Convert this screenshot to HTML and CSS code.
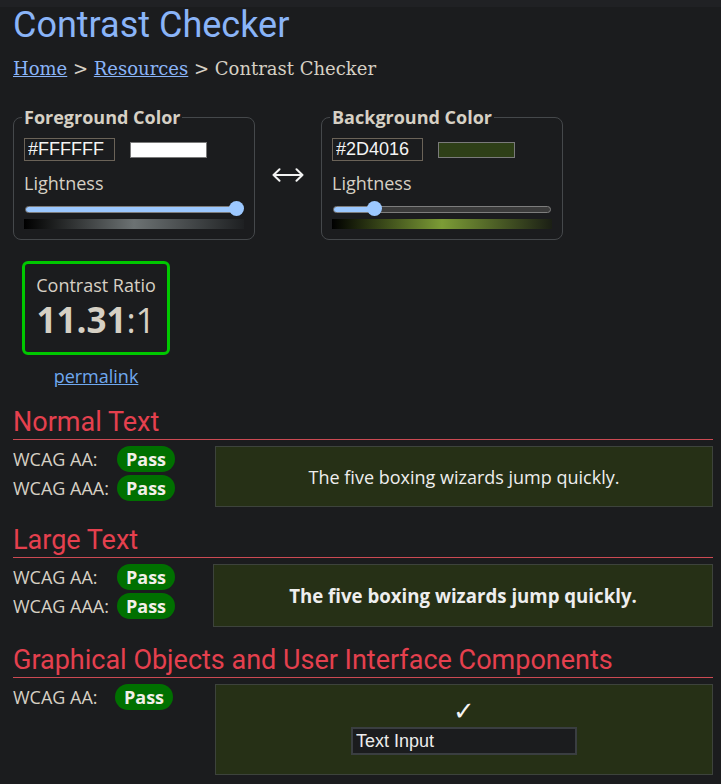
FILE: index.html
```html
<!DOCTYPE html>
<html lang="en">
<head>
<meta charset="utf-8">
<title>Contrast Checker</title>
<link rel="stylesheet" href="styles.css">
</head>
<body>
<div class="topbar"></div>
<main class="page">
  <h1 class="title">Contrast Checker</h1>
  <nav class="crumbs"><a href="#">Home</a> &gt; <a href="#">Resources</a> &gt; Contrast Checker</nav>

  <div class="pickers">
    <fieldset class="picker">
      <legend>Foreground Color</legend>
      <div class="hexrow">
        <input class="hex" type="text" value="#FFFFFF">
        <span class="swatch swatch-fg"></span>
      </div>
      <label class="lbl">Lightness</label>
      <div class="slider">
        <div class="track"><div class="fill" style="width:100%"></div></div>
        <span class="thumb" style="left:205px"></span>
      </div>
      <div class="grad grad-fg"></div>
    </fieldset>

    <div class="swap">
      <svg width="32" height="14" viewBox="0 0 32 14" aria-hidden="true">
        <path d="M1.5 7 H30.5 M7.5 1.2 L1.5 7 L7.5 12.8 M24.5 1.2 L30.5 7 L24.5 12.8" fill="none" stroke="#f2f2f2" stroke-width="2" stroke-linecap="round" stroke-linejoin="round"/>
      </svg>
    </div>

    <fieldset class="picker">
      <legend>Background Color</legend>
      <div class="hexrow">
        <input class="hex" type="text" value="#2D4016">
        <span class="swatch swatch-bg"></span>
      </div>
      <label class="lbl">Lightness</label>
      <div class="slider">
        <div class="track"><div class="fill" style="width:43px"></div></div>
        <span class="thumb" style="left:35px"></span>
      </div>
      <div class="grad grad-bg"></div>
    </fieldset>
  </div>

  <div class="ratio-wrap">
    <div class="ratio">
      <div class="ratio-label">Contrast Ratio</div>
      <div class="ratio-value"><b>11.31</b>:1</div>
    </div>
    <a class="permalink" href="#">permalink</a>
  </div>

  <section class="result">
    <h2 class="result-title">Normal Text</h2>
    <div class="result-body">
      <div class="levels">
        <div class="level"><span class="level-name">WCAG AA:</span><span class="pill">Pass</span></div>
        <div class="level"><span class="level-name">WCAG AAA:</span><span class="pill">Pass</span></div>
      </div>
      <div class="sample sample-normal">The five boxing wizards jump quickly.</div>
    </div>
  </section>

  <section class="result">
    <h2 class="result-title">Large Text</h2>
    <div class="result-body result-body-large">
      <div class="levels">
        <div class="level"><span class="level-name">WCAG AA:</span><span class="pill">Pass</span></div>
        <div class="level"><span class="level-name">WCAG AAA:</span><span class="pill">Pass</span></div>
      </div>
      <div class="sample sample-large">The five boxing wizards jump quickly.</div>
    </div>
  </section>

  <section class="result">
    <h2 class="result-title">Graphical Objects and User Interface Components</h2>
    <div class="result-body">
      <div class="levels">
        <div class="level"><span class="level-name level-name-short">WCAG AA:</span><span class="pill">Pass</span></div>
      </div>
      <div class="sample sample-ui">
        <span class="check">✓</span>
        <input class="ui-input" type="text" value="Text Input">
      </div>
    </div>
  </section>
</main>
</body>
</html>
```

FILE: styles.css
```css
html, body {
  margin: 0;
  background: #1b1c1e;
}

body {
  color: #d6d0c4;
  font-family: "Open Sans", sans-serif;
}

.topbar {
  height: 7px;
  background: #202124;
}

.page {
  padding: 0 8px 20px 13px;
}

.title {
  margin: 0;
  font: 400 36px/36px Roboto, sans-serif;
  color: #8ab4f8;
}

.crumbs {
  margin-top: 15px;
  font: 18px/22px "DejaVu Serif", serif;
  color: #d6d0c4;
}

.crumbs a {
  color: #8ab4f8;
}

/* pickers */
.pickers {
  display: flex;
  align-items: center;
  margin-top: 25px;
}

.picker {
  box-sizing: border-box;
  width: 242px;
  margin: 0;
  min-width: 0;
  padding: 9px 10px 10px;
  border: 1px solid #45484b;
  border-radius: 8px;
}

.picker legend {
  padding: 0 2px;
  margin-left: -2px;
  font: 700 18px/24px "Open Sans", sans-serif;
  color: #d6d0c4;
}

.hexrow {
  display: flex;
  align-items: center;
  gap: 15px;
}

.hex {
  box-sizing: border-box;
  width: 91px;
  height: 23px;
  margin: 0;
  padding: 0 3px;
  border: 1px solid #6b6358;
  background: transparent;
  color: #f4f4f4;
  font: 18px "Liberation Sans", sans-serif;
  outline: none;
}

.swatch {
  box-sizing: border-box;
  width: 77px;
  height: 16px;
  border: 1px solid #7a7a7a;
}

.swatch-fg { background: #ffffff; }
.swatch-bg { background: #2e3f17; }

.lbl {
  display: block;
  margin-top: 10px;
  font: 18px/24px "Open Sans", sans-serif;
  color: #d6d0c4;
}

.slider {
  position: relative;
  height: 16px;
  margin-top: 6px;
  display: flex;
  align-items: center;
}

.track {
  box-sizing: border-box;
  flex: 1;
  height: 7px;
  margin: 0 1px;
  border: 1px solid #7d7d7d;
  border-radius: 4px;
  background: #3b3b3b;
  overflow: hidden;
}

.fill {
  height: 100%;
  background: #9cc8ff;
}

.thumb {
  position: absolute;
  top: 0;
  width: 15px;
  height: 15px;
  border-radius: 50%;
  background: #9cc8ff;
}

.grad {
  height: 10px;
  margin-top: 2px;
}

.grad-fg {
  background: linear-gradient(to right, #000 0%, #6c7273 50%, #1e2022 100%);
}

.grad-bg {
  background: linear-gradient(to right, #000 0%, #7c9c36 50%, #1b1f15 100%);
}

.swap {
  width: 66px;
  display: flex;
  justify-content: center;
  margin-top: 5px;
}

/* ratio */
.ratio-wrap {
  display: flex;
  flex-direction: column;
  align-items: center;
  width: 148px;
  margin: 21px 0 0 9px;
}

.ratio {
  box-sizing: border-box;
  width: 148px;
  height: 94px;
  padding: 10px 0 0;
  border: 3px solid #00c800;
  border-radius: 6px;
  text-align: center;
}

.ratio-label {
  font: 18px/22px "Open Sans", sans-serif;
}

.ratio-value {
  margin-top: 4px;
  font: 400 35px/40px "Open Sans", sans-serif;
}

.ratio-value b {
  font-weight: 700;
}

.permalink {
  margin-top: 10px;
  font: 18px/22px "Open Sans", sans-serif;
  color: #6fa8f0;
}

/* results */
.result-title {
  margin: 20px 0 0;
  padding-bottom: 2px;
  border-bottom: 1px solid #cc4a53;
  font: 400 27px/30px Roboto, sans-serif;
  color: #e5404e;
}

.result + .result .result-title {
  margin-top: 18px;
}

.result-body {
  display: grid;
  grid-template-columns: 202px 1fr;
  align-items: start;
  margin-top: 6px;
}

.result-body-large {
  grid-template-columns: 200px 1fr;
}

.levels {
  display: flex;
  flex-direction: column;
  gap: 3px;
}

.level {
  display: flex;
  align-items: center;
  height: 26px;
}

.level-name {
  width: 104px;
  font: 18px/22px "Open Sans", sans-serif;
  color: #d6d0c4;
}

.level-name-short {
  width: 102px;
}

.pill {
  width: 58px;
  height: 26px;
  border-radius: 13px;
  background: #007000;
  color: #f2efe8;
  font: 700 18px/26px "Open Sans", sans-serif;
  text-align: center;
}

.sample {
  box-sizing: border-box;
  display: flex;
  align-items: center;
  justify-content: center;
  border: 1px solid #3d433c;
  background: #263016;
  color: #eeeeee;
}

.sample-normal {
  height: 61px;
  font: 18px/24px "Open Sans", sans-serif;
}

.sample-large {
  height: 63px;
  font: 700 18.66px/26px "Open Sans", sans-serif;
}

.sample-ui {
  height: 91px;
  flex-direction: column;
  justify-content: flex-start;
  padding-top: 13px;
}

.check {
  font: 26px/27px "DejaVu Sans", sans-serif;
  color: #f4f4f4;
}

.ui-input {
  box-sizing: border-box;
  width: 226px;
  height: 28px;
  margin: 2px 0 0;
  padding: 0 3px;
  border: 2px solid #3a3e41;
  background: #1b1c1e;
  color: #ececec;
  font: 18px "Liberation Sans", sans-serif;
  outline: none;
}
```
